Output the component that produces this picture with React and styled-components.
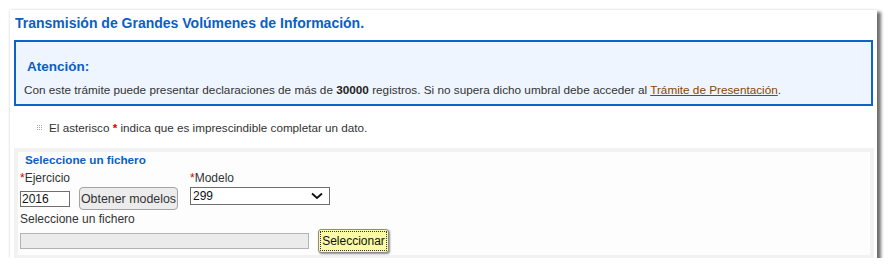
import React from "react";
import styled, { createGlobalStyle } from "styled-components";

const Global = createGlobalStyle`
  html, body { margin: 0; padding: 0; background: #ffffff; }
  body { font-family: "Liberation Sans", Arial, sans-serif; color: #333; }
`;

const Page = styled.div`
  padding: 10px 0 0 10px;
`;

const Panel = styled.div`
  width: 859px;
  padding: 0 4px;
  background: #fff;
  box-shadow: 3px 3px 3px 1px rgba(0, 0, 0, 0.55), 0 0 3px rgba(0, 0, 0, 0.12);
`;

const Title = styled.h1`
  margin: 0;
  padding: 5px 1px 8px;
  font-size: 14px;
  line-height: 17px;
  font-weight: bold;
  color: #0a5ec8;
`;

const Notice = styled.div`
  border: 2px solid #0b63cc;
  background: #eef5fe;
  padding: 16.5px 8px 7.5px;
`;

const NoticeTitle = styled.h2`
  margin: 0 0 7px 3px;
  font-size: 13.5px;
  line-height: 16px;
  font-weight: bold;
  color: #0a5ec8;
`;

const Text = styled.p`
  margin: 0;
  font-size: 11.75px;
  line-height: 15px;
  color: #333;
  b { color: #222; }
`;

const Link = styled.a`
  color: #8a4500;
  text-decoration: underline;
`;

const Note = styled.div`
  display: flex;
  align-items: center;
  gap: 6px;
  margin: 14px 0 0 23px;
  font-size: 11.7px;
  line-height: 15px;
  color: #333;
`;

const Req = styled.span`
  color: #d40000;
  font-weight: ${(p) => (p.$bold ? "bold" : "normal")};
`;

const Fieldset = styled.div`
  margin-top: 12.5px;
  border: 4px solid #f2f2f2;
  border-bottom-width: 3px;
  background: #fdfdfd;
  width: 850px;
  padding: 0 0 2px 2px;
`;

const Legend = styled.div`
  padding: 1.5px 0 0 5px;
  font-size: 11.7px;
  line-height: 13px;
  font-weight: bold;
  color: #0a5ec8;
`;

const FieldsRow = styled.div`
  display: flex;
  margin-top: 5px;
`;

const Column = styled.div`
  display: flex;
  flex-direction: column;
  width: ${(p) => (p.$w ? `${p.$w}px` : "auto")};
`;

const Label = styled.div`
  font-size: 12px;
  line-height: 14px;
  color: #333;
  margin-top: ${(p) => p.$mt || 0}px;
`;

const Inline = styled.div`
  display: flex;
  align-items: center;
  gap: ${(p) => p.$gap || 10}px;
  margin-top: ${(p) => p.$mt || 0}px;
`;

const TextBox = styled.div`
  box-sizing: border-box;
  width: ${(p) => p.$w}px;
  height: ${(p) => p.$h}px;
  border: 1px solid ${(p) => (p.$disabled ? "#b3b3b3" : "#6f6f6f")};
  background: ${(p) => (p.$disabled ? "#ebebeb" : "#fff")};
  font-size: 12px;
  line-height: 14px;
  padding: 0 1px;
  color: #111;
`;

const Button = styled.div`
  box-sizing: border-box;
  width: 99px;
  height: 23px;
  display: flex;
  align-items: center;
  justify-content: center;
  border: 1px solid #a3a3a3;
  border-radius: 4px;
  background: #ececec;
  font-size: 12.4px;
  color: #333;
`;

const FocusButton = styled.div`
  box-sizing: border-box;
  width: 71px;
  height: 24px;
  display: flex;
  align-items: center;
  justify-content: center;
  border: 1px solid #8c8c8c;
  border-radius: 3px;
  background: #fbfba6;
  outline: 1px dotted #333;
  outline-offset: -3px;
  box-shadow: 1px 1px 2px rgba(0, 0, 0, 0.45);
  font-size: 12px;
  color: #111;
`;

const Select = styled.div`
  box-sizing: border-box;
  width: 140px;
  height: 18px;
  margin-top: 2px;
  display: flex;
  align-items: center;
  justify-content: space-between;
  border: 1px solid #6f6f6f;
  background: #fff;
  padding: 0 6px 0 2px;
  font-size: 12px;
  color: #111;
`;

const GridIcon = () => (
  <svg width="6" height="6" viewBox="0 0 6 6">
    {[0, 2, 4].map((y) =>
      [0, 2, 4].map((x) => (
        <rect key={`${x}-${y}`} x={x} y={y} width="1" height="1" fill="#a8a8a8" />
      ))
    )}
  </svg>
);

const Chevron = () => (
  <svg width="12" height="8" viewBox="0 0 12 8">
    <path d="M1 1.5 L6 6 L11 1.5" fill="none" stroke="#111" strokeWidth="1.8" />
  </svg>
);

export default function App() {
  return (
    <>
      <Global />
      <Page>
        <Panel>
          <Title>Transmisión de Grandes Volúmenes de Información.</Title>
          <Notice>
            <NoticeTitle>Atención:</NoticeTitle>
            <Text>
              Con este trámite puede presentar declaraciones de más de <b>30000</b> registros. Si no
              supera dicho umbral debe acceder al <Link href="#">Trámite de Presentación</Link>.
            </Text>
          </Notice>
          <Note>
            <GridIcon />
            <span>
              El asterisco <Req $bold>*</Req> indica que es imprescindible completar un dato.
            </span>
          </Note>
          <Fieldset>
            <Legend>Seleccione un fichero</Legend>
            <FieldsRow>
              <Column $w={170}>
                <Label>
                  <Req>*</Req>Ejercicio
                </Label>
                <Inline $gap={9} $mt={2}>
                  <TextBox $w={50} $h={16}>2016</TextBox>
                  <Button>Obtener modelos</Button>
                </Inline>
              </Column>
              <Column>
                <Label>
                  <Req>*</Req>Modelo
                </Label>
                <Select>
                  <span>299</span>
                  <Chevron />
                </Select>
              </Column>
            </FieldsRow>
            <Label $mt={2}>Seleccione un fichero</Label>
            <Inline $gap={9} $mt={3}>
              <TextBox $w={289} $h={16} $disabled />
              <FocusButton>Seleccionar</FocusButton>
            </Inline>
          </Fieldset>
        </Panel>
      </Page>
    </>
  );
}
